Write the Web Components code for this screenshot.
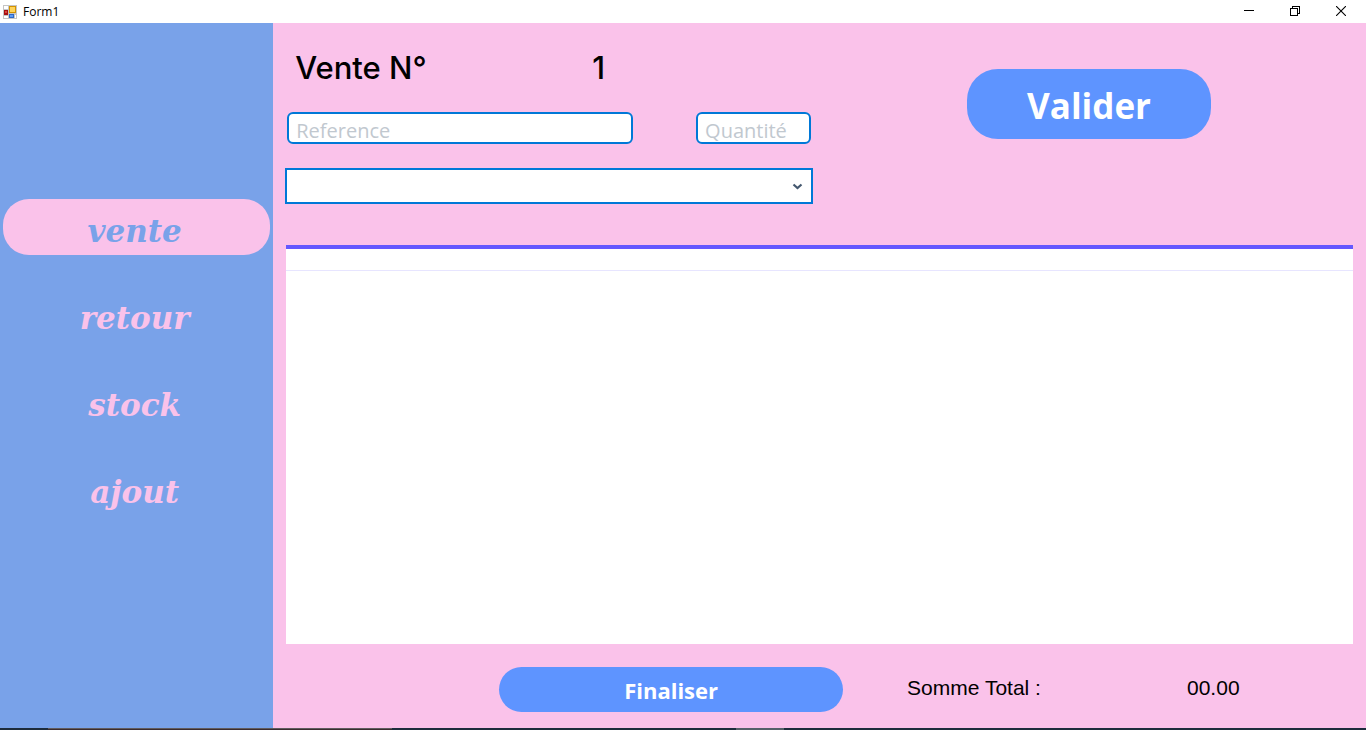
<!DOCTYPE html>
<html lang="fr">
<head>
<meta charset="utf-8">
<title>Form1</title>
<style>
  html, body { margin: 0; height: 100%; }
  body {
    --pink: #fac2ea;
    --blue: #79a2e9;
    --action: #5e94ff;
    --line: #0078d7;
    font-family: "Open Sans", "Noto Sans", sans-serif;
    color: #000;
  }
</style>
</head>
<body>
<app-window>
  <title-bar slot="title">Form1</title-bar>
  <side-nav slot="nav">
    <nav-item active>vente</nav-item>
    <nav-item>retour</nav-item>
    <nav-item>stock</nav-item>
    <nav-item>ajout</nav-item>
  </side-nav>
  <sale-form></sale-form>
  <sale-grid></sale-grid>
  <sale-footer></sale-footer>
  <task-strip slot="taskbar"></task-strip>
</app-window>

<script>
const define = (name, html) => {
  const template = document.createElement('template');
  template.innerHTML = html;
  customElements.define(name, class extends HTMLElement {
    constructor() {
      super();
      this.attachShadow({ mode: 'open' }).append(template.content.cloneNode(true));
    }
  });
};

define('app-window', `
<style>
  :host { display: flex; flex-direction: column; min-height: 100vh; background: var(--pink); }
  .body { flex: 1; display: flex; }
  main { flex: 1; min-width: 0; display: flex; flex-direction: column; padding: 0 13px 16px 12px; }
</style>
<slot name="title"></slot>
<div class="body">
  <slot name="nav"></slot>
  <main><slot></slot></main>
</div>
<slot name="taskbar"></slot>`);

define('title-bar', `
<style>
  :host { display: flex; align-items: center; height: 23px; padding-right: 2px; background: #fff; font-size: 12px; line-height: 16px; }
  .icon { margin: 0 6px 0 3px; }
  .name { flex: 1; }
  button { width: 46px; height: 23px; padding: 0 0 2px; border: 0; background: none; display: grid; place-items: center; }
  svg { display: block; }
</style>
<svg class="icon" width="14" height="14" viewBox="0 0 14 14" aria-hidden="true">
  <path d="M0 0H14V14H0Z" fill="#c5c5c5"/>
  <path d="M1 1H5V4H1ZM1 11H5V13H1ZM12 10H13V13H12Z" fill="#fff"/>
  <path d="M6 1H13V8H6Z" fill="#d39300"/><path d="M7 2H12V7H7Z" fill="#ffd45a"/>
  <path d="M1 5H5V10H1Z" fill="#a80f12"/><path d="M2 6H4V8H2Z" fill="#d8453c"/>
  <path d="M6 9H11V13H6Z" fill="#2f68c5"/><path d="M7 10H10V12H7Z" fill="#5f9cf5"/>
</svg>
<span class="name"><slot></slot></span>
<button aria-label="Réduire"><svg width="10" height="10" shape-rendering="crispEdges"><path d="M0 4H10V5H0Z"/></svg></button>
<button aria-label="Restaurer"><svg width="10" height="10" shape-rendering="crispEdges" fill="none" stroke="#000"><path d="M.5 2.5H7.5V9.5H.5ZM2.5 2.5V.5H9.5V7.5H7.5"/></svg></button>
<button aria-label="Fermer"><svg width="10" height="10" fill="none" stroke="#000" stroke-width="1.1"><path d="M0 0L10 10M10 0L0 10"/></svg></button>`);

define('side-nav', `
<style>
  :host { display: block; width: 20%; flex: none; background: var(--blue); }
  nav { display: flex; flex-direction: column; gap: 31px; padding: 176px 3px 0; }
</style>
<nav><slot></slot></nav>`);

define('nav-item', `
<style>
  :host { display: block; }
  button {
    display: block; width: 100%; height: 56px; padding: 8px 4px 0 0; border: 0; border-radius: 26px;
    background: none; color: var(--pink);
    font: italic bold 31px/40px "DejaVu Serif", serif;
  }
  :host([active]) button { background: var(--pink); color: var(--blue); }
</style>
<button><slot></slot></button>`);

define('action-button', `
<style>
  :host { display: block; }
  button {
    display: block; width: 100%; height: var(--button-height); padding: var(--button-pad, 4px) 0 0;
    border: 0; border-radius: var(--button-radius); background: var(--action); color: #fff;
    font: bold var(--button-text) "Open Sans", "Noto Sans", sans-serif;
  }
</style>
<button><slot></slot></button>`);

define('sale-form', `
<style>
  :host { display: grid; grid-template-columns: 528fr 540fr; padding: 25px 0 41px; }
  .fields { display: flex; flex-direction: column; gap: 24px; }
  .head { display: flex; align-items: center; height: 40px; padding: 0 10px; font: 500 31px/40px Inter, "Liberation Sans", sans-serif; }
  h1 { margin: 0; flex: 0 0 297px; font: inherit; }
  .row { display: flex; gap: 63px; padding: 0 2px; }
  input {
    box-sizing: border-box; height: 32px; min-width: 0; margin: 0; padding: 4px 7px 0; flex: 1;
    border: 2px solid var(--line); border-radius: 6px; background: #fff; color: #444;
    font: 20px/24px "Open Sans", "Noto Sans", sans-serif;
  }
  input.qty { flex: 0 0 115px; }
  input::placeholder { color: #c1c8cf; opacity: 1; }
  .pick { display: grid; }
  .pick > * { grid-area: 1 / 1; }
  select {
    appearance: none; box-sizing: border-box; width: 100%; height: 36px; margin: 0; padding: 0 30px 0 8px;
    border: 2px solid var(--line); border-radius: 0; background: #fff;
    font: 20px/24px "Open Sans", "Noto Sans", sans-serif;
  }
  svg { place-self: center end; margin-right: 10px; pointer-events: none; }
  action-button { width: 244px; place-self: start center; margin: 21px 0 0 12px; --button-height: 70px; --button-radius: 31px; --button-text: 35px/48px; }
</style>
<form class="fields">
  <div class="head"><h1>Vente N°</h1><output>1</output></div>
  <div class="row">
    <input type="text" aria-label="Reference" placeholder="Reference">
    <input class="qty" type="text" inputmode="numeric" aria-label="Quantité" placeholder="Quantité">
  </div>
  <div class="pick">
    <select aria-label="Article"><option value=""></option></select>
    <svg width="11" height="8" viewBox="0 0 11 8" aria-hidden="true"><path d="M1.500 2.500L5.500 6L9.500 2.500" fill="none" stroke="#44586f" stroke-width="2.200"/></svg>
  </div>
</form>
<action-button>Valider</action-button>`);

define('sale-grid', `
<style>
  :host { flex: 1; display: block; margin-left: 1px; border-top: 4px solid #6458ff; background: #fff; }
  table { width: 100%; border-collapse: collapse; }
  th { height: 21px; padding: 0; border-bottom: 1px solid #e7e5ff; }
</style>
<table aria-label="Articles de la vente"><thead><tr><th></th></tr></thead><tbody></tbody></table>`);

define('sale-footer', `
<style>
  :host { display: grid; grid-template-columns: 214fr 344fr 64fr 446fr; align-items: center; padding-top: 23px; }
  action-button { grid-column: 2; --button-height: 45px; --button-radius: 23px; --button-text: 22px/32px; --button-pad: 1px; }
  .total { grid-column: 4; display: grid; grid-template-columns: 280fr 166fr; font: 21px/24px "Liberation Sans", Arial, sans-serif; padding-bottom: 3px; }
</style>
<action-button>Finaliser</action-button>
<div class="total"><span>Somme Total :</span><output>00.00</output></div>`);

define('task-strip', `
<style>
  :host { display: flex; height: 2px; background: #1d2c3c; }
  i { display: block; box-sizing: border-box; }
  .wide { margin-left: 48px; width: 344px; background: #3a2c30; border-top: 1px solid #5f5b5e; }
  .short { margin-left: 344px; width: 48px; background: #566069; }
</style>
<i class="wide"></i><i class="short"></i>`);
</script>
</body>
</html>
